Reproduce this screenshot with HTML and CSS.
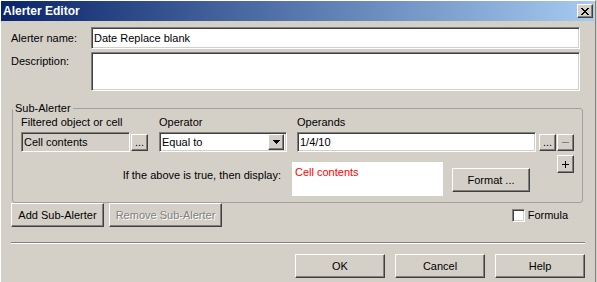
FILE: index.html
```html
<!DOCTYPE html>
<html lang="en">
<head>
  <meta charset="UTF-8" />
  <title>Alerter Editor</title>
  <link rel="stylesheet" href="styles.css">
</head>
<body>
  <div class="window">
    <div class="titlebar">
      <span class="title">Alerter Editor</span>
      <button class="close raised" aria-label="Close">
        <svg width="8" height="7" viewBox="0 0 8 7" shape-rendering="crispEdges"><path fill="#000" d="M0 0h2v1H0zM6 0h2v1H6zM1 1h2v1H1zM5 1h2v1H5zM2 2h4v1H2zM3 3h2v1H3zM2 4h4v1H2zM1 5h2v1H1zM5 5h2v1H5zM0 6h2v1H0zM6 6h2v1H6z"/></svg>
      </button>
    </div>

    <div class="content">
      <div class="form-grid">
        <label class="lbl">Alerter name:</label>
        <div class="field sunken name-field">Date Replace blank</div>
        <label class="lbl lbl-top">Description:</label>
        <div class="field sunken desc-field"></div>
      </div>

      <fieldset class="group">
        <legend>Sub-Alerter</legend>
        <div class="sub-grid">
          <div class="cap">Filtered object or cell</div>
          <div class="cap">Operator</div>
          <div class="cap">Operands</div>

          <div class="line">
            <div class="field sunken readonly filter-field">Cell contents</div>
            <button class="btn raised mini">...</button>
          </div>
          <div class="line">
            <div class="field sunken combo">
              <span>Equal to</span>
              <span class="drop raised">
                <svg width="7" height="4" viewBox="0 0 7 4" shape-rendering="crispEdges"><path fill="#000" d="M0 0h7v1H0zM1 1h5v1H1zM2 2h3v1H2zM3 3h1v1H3z"/></svg>
              </span>
            </div>
          </div>
          <div class="line">
            <div class="field sunken operand-field">1/4/10</div>
            <button class="btn raised mini dots">...</button>
            <button class="btn raised mini" disabled>
              <svg width="7" height="1" viewBox="0 0 7 1" shape-rendering="crispEdges"><path fill="#808080" d="M0 0h7v1H0z"/></svg>
            </button>
          </div>
        </div>

        <div class="display-row">
          <span class="display-lbl">If the above is true, then display:</span>
          <div class="preview">Cell contents</div>
          <button class="btn raised format-btn">Format ...</button>
          <button class="btn raised mini plus">
            <svg width="7" height="7" viewBox="0 0 7 7" shape-rendering="crispEdges"><path fill="#000" d="M3 0h1v7H3zM0 3h7v1H0z"/></svg>
          </button>
        </div>
      </fieldset>

      <div class="sub-actions">
        <button class="btn raised add-btn">Add Sub-Alerter</button>
        <button class="btn raised remove-btn" disabled>Remove Sub-Alerter</button>
        <label class="check">
          <span class="box sunken"></span>
          <span>Formula</span>
        </label>
      </div>

      <div class="separator"></div>

      <div class="dialog-buttons">
        <button class="btn raised wide">OK</button>
        <button class="btn raised wide">Cancel</button>
        <button class="btn raised wide">Help</button>
      </div>
    </div>
  </div>
</body>
</html>
```

FILE: styles.css
```css
* {
  box-sizing: border-box;
}
html, body {
  margin: 0;
  padding: 0;
  background: #d4d0c8;
}
body {
  font-family: "Liberation Sans", Arial, sans-serif;
  font-size: 11px;
  line-height: 13px;
  color: #000;
}

/* classic 3d edges */
.raised {
  background: #d4d0c8;
  border: 1px solid;
  border-color: #fff #404040 #404040 #fff;
  box-shadow: inset -1px -1px 0 #808080;
}
.sunken {
  background: #fff;
  border: 1px solid;
  border-color: #808080 #fff #fff #808080;
  box-shadow: inset 1px 1px 0 #404040, inset -1px -1px 0 #d4d0c8;
}

.window {
  width: 596px;
  height: 282px;
  border-top: 1px solid #fff;
  border-left: 1px solid #fff;
  border-right: 1px solid #808080;
}

.titlebar {
  height: 20px;
  margin-right: 1px;
  padding: 0 1px 0 2px;
  display: flex;
  align-items: center;
  justify-content: space-between;
  background: linear-gradient(to right, #0a246a, #a6caf0);
}
.title {
  color: #fff;
  font-weight: bold;
  font-size: 12px;
}
.close {
  width: 16px;
  height: 14px;
  padding: 0;
  display: flex;
  align-items: center;
  justify-content: center;
}

.content {
  width: 584px;
  padding: 6px 0 0 10px;
}

.form-grid {
  display: grid;
  grid-template-columns: 80px 489px;
  row-gap: 3px;
}
.lbl {
  align-self: center;
}
.lbl-top {
  align-self: start;
  padding-top: 3px;
}

.field {
  display: flex;
  align-items: center;
  padding-left: 2px;
  white-space: nowrap;
}
.name-field {
  height: 22px;
}
.desc-field {
  height: 39px;
}
.readonly {
  background: #d4d0c8;
}

.group {
  width: 564px;
  margin: 11px 0 0 1px;
  padding: 1px 8px 6px 8px;
  border: 1px solid #a0a0a0;
  border-radius: 3px;
}
.group legend {
  margin-left: -8px;
  padding: 0 2px;
  line-height: 13px;
}

.sub-grid {
  display: grid;
  grid-template-columns: 138px 138px 1fr;
  row-gap: 3px;
}
.cap {
  height: 13px;
}
.line {
  display: flex;
  align-items: center;
  height: 20px;
}
.filter-field {
  width: 109px;
  height: 20px;
  margin-right: 1px;
}
.combo {
  width: 128px;
  height: 20px;
  justify-content: space-between;
  padding-right: 2px;
}
.drop {
  width: 16px;
  height: 16px;
  display: flex;
  align-items: center;
  justify-content: center;
}
.operand-field {
  width: 239px;
  height: 20px;
  margin-right: 3px;
}

.btn {
  font: inherit;
  color: #000;
  padding: 0;
  display: flex;
  align-items: center;
  justify-content: center;
}
.btn:disabled {
  color: #808080;
  text-shadow: 1px 1px 0 #fff;
}
.mini {
  width: 17px;
  height: 17px;
  line-height: 11px;
}
.dots {
  margin-right: 1px;
}

.display-row {
  display: flex;
  align-items: flex-start;
  margin-top: 3px;
}
.display-lbl {
  width: 260px;
  text-align: right;
  margin-top: 14px;
}
.preview {
  width: 151px;
  height: 34px;
  margin: 7px 0 0 11px;
  padding: 4px 3px;
  background: #fff;
  color: #ff0000;
}
.format-btn {
  width: 78px;
  height: 24px;
  margin: 13px 0 0 9px;
}
.plus {
  margin-left: 27px;
  height: 18px;
}

.sub-actions {
  display: flex;
  align-items: center;
  margin-top: 0;
}
.add-btn {
  width: 93px;
  height: 24px;
}
.remove-btn {
  width: 113px;
  height: 24px;
  margin-left: 5px;
}
.check {
  display: flex;
  align-items: center;
  gap: 3px;
  margin-left: auto;
  margin-right: 17px;
}
.box {
  width: 13px;
  height: 13px;
}

.separator {
  margin-top: 15px;
  border-top: 1px solid #808080;
  border-bottom: 1px solid #fff;
}

.dialog-buttons {
  display: flex;
  justify-content: flex-end;
  gap: 10px;
  margin-top: 10px;
}
.wide {
  width: 90px;
  height: 24px;
}
```
